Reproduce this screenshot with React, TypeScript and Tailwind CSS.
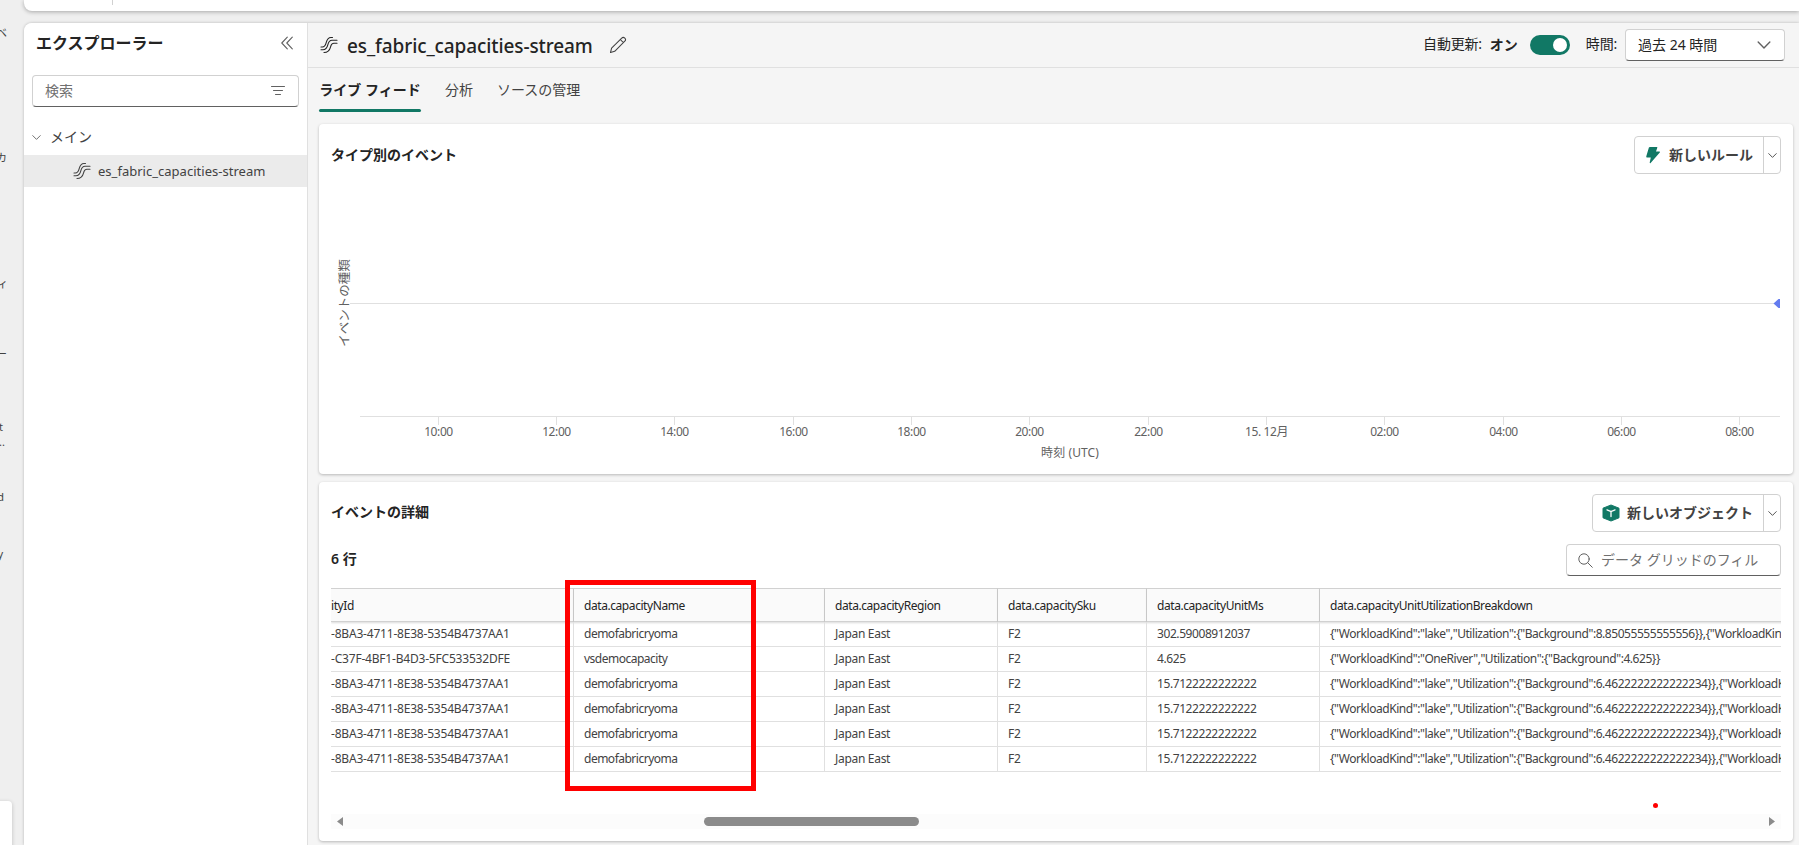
import React from "react";

const TICKS = [
  { label: "10:00", x: 438 },
  { label: "12:00", x: 556 },
  { label: "14:00", x: 674 },
  { label: "16:00", x: 793 },
  { label: "18:00", x: 911 },
  { label: "20:00", x: 1029 },
  { label: "22:00", x: 1148 },
  { label: "15. 12月", x: 1266 },
  { label: "02:00", x: 1384 },
  { label: "04:00", x: 1503 },
  { label: "06:00", x: 1621 },
  { label: "08:00", x: 1739 },
];

const AA1 = "-8BA3-4711-8E38-5354B4737AA1";
const LAKE = '{"WorkloadKind":"lake","Utilization":{"Background":6.4622222222222234}},{"WorkloadKind"';

const ROWS = [
  [AA1, "demofabricryoma", "Japan East", "F2", "302.59008912037", '{"WorkloadKind":"lake","Utilization":{"Background":8.85055555555556}},{"WorkloadKind"'],
  ["-C37F-4BF1-B4D3-5FC533532DFE", "vsdemocapacity", "Japan East", "F2", "4.625", '{"WorkloadKind":"OneRiver","Utilization":{"Background":4.625}}'],
  [AA1, "demofabricryoma", "Japan East", "F2", "15.7122222222222", LAKE],
  [AA1, "demofabricryoma", "Japan East", "F2", "15.7122222222222", LAKE],
  [AA1, "demofabricryoma", "Japan East", "F2", "15.7122222222222", LAKE],
  [AA1, "demofabricryoma", "Japan East", "F2", "15.7122222222222", LAKE],
];

const COLUMNS = [
  { name: "ityId", cell: "tracking-[-0.2px]" },
  { name: "data.capacityName", cell: "pl-[10px] tracking-[-0.5px]" },
  { name: "data.capacityRegion", cell: "pl-[10px] tracking-[-0.3px]" },
  { name: "data.capacitySku", cell: "pl-[10px] tracking-[-0.3px]" },
  { name: "data.capacityUnitMs", cell: "pl-[10px] tracking-[-0.42px]" },
  { name: "data.capacityUnitUtilizationBreakdown", cell: "pl-[10px] tracking-[-0.45px]" },
];

function StreamIcon() {
  return (
    <svg width="18" height="18" viewBox="0 0 18 18" fill="none" stroke="currentColor" strokeWidth="1.1" strokeLinecap="round">
      <path d="M1 11h1.300c2.400 0 3.200-1.500 3.900-4.300C7 3.300 8.300 1.500 11 1.500h1.500" />
      <path d="M1 13.700h1.800c3 0 4.200-1.500 5-4.900C8.700 5.400 9.700 4.300 12 4.300h5" />
      <path d="M4 16.500c3.700 0 5.500-1.500 6.500-5.400.7-2.800 1.500-3.800 3.500-3.800h3" />
    </svg>
  );
}

function Chevron({ size, className }: { size: number; className?: string }) {
  return (
    <svg className={className} width={size} height={size} viewBox="0 0 12 12" fill="none" stroke="currentColor" strokeWidth="1.2" strokeLinecap="round" strokeLinejoin="round">
      <path d="M1 3.500 6 8.500 11 3.500" />
    </svg>
  );
}

function SplitButton({ icon, label }: { icon: React.ReactNode; label: string }) {
  return (
    <div className="flex h-[38px] rounded-[4px] border border-[#d1d1d1] bg-white text-[#424242]">
      <div className="flex items-center gap-[7px] pl-[9px] pr-[10px]">
        {icon}
        <span className="pb-px text-[14px] leading-5 font-bold whitespace-nowrap">{label}</span>
      </div>
      <div className="flex w-[17px] items-center justify-center border-l border-[#d1d1d1]">
        <Chevron size={9} />
      </div>
    </div>
  );
}

function LeftRail() {
  return (
    <div className="relative h-full w-6 shrink-0 text-[11px] leading-4 text-[#424242]">
      <div className="absolute top-[25px] right-[17px]">ベ</div>
      <div className="absolute top-[150px] right-[17px]">カ</div>
      <div className="absolute top-[276px] right-[16px]">ィ</div>
      <div className="absolute top-[346px] right-[17px]">ー</div>
      <div className="absolute top-[419px] right-[21px]">t</div>
      <div className="absolute top-[434px] right-[19px]">...</div>
      <div className="absolute top-[489px] right-[20px]">d</div>
      <div className="absolute top-[546px] right-[21px]">y</div>
      <div className="absolute top-[801px] left-[-8px] h-[60px] w-[20px] rounded-[4px] bg-white shadow-[0_1px_4px_rgba(0,0,0,0.2)]" />
    </div>
  );
}

function Explorer() {
  return (
    <div className="flex w-[284px] shrink-0 flex-col border-r border-[#e0e0e0] bg-white">
      <div className="flex h-[40px] items-center justify-between pr-[14px] pl-3">
        <span className="text-[16px] leading-6 font-bold text-[#242424]">エクスプローラー</span>
        <svg width="12" height="14" viewBox="0 0 12 14" fill="none" stroke="#616161" strokeWidth="1.1" strokeLinecap="round" strokeLinejoin="round">
          <path d="M6.300 1.200.8 7l5.500 5.800M11.300 1.200 5.800 7l5.500 5.800" />
        </svg>
      </div>
      <div className="mx-2 mt-[12px] flex h-[32px] items-center justify-between rounded-[4px] border border-[#d1d1d1] border-b-[#616161] pr-[13px] pl-[12px] text-[14px] text-[#707070]">
        <span className="pb-[2px]">検索</span>
        <svg width="14" height="10" viewBox="0 0 14 10" fill="none" stroke="#616161" strokeWidth="1" strokeLinecap="round">
          <path d="M.5.5h13M2.500 4.500h9M4.500 8.500h5" />
        </svg>
      </div>
      <div className="mt-[12px] flex h-[36px] items-center gap-[9px] pl-2 text-[14px] text-[#424242]">
        <Chevron size={9} className="text-[#616161]" />
        <span className="pb-[2px]">メイン</span>
      </div>
      <div className="flex h-[32px] items-center gap-[7px] bg-[#ebebeb] pl-[49px] text-[#424242]">
        <StreamIcon />
        <span className="pt-[2px] text-[13px] tracking-[0.02px]">es_fabric_capacities-stream</span>
      </div>
    </div>
  );
}

function Header() {
  return (
    <div className="flex h-[45px] shrink-0 items-center border-b border-[#e0e0e0] pr-[14px] pl-[12px] text-[#242424]">
      <StreamIcon />
      <span className="ml-[9px] pt-[2px] text-[19px] leading-6 font-medium tracking-[-0.1px]">es_fabric_capacities-stream</span>
      <svg className="ml-[16px]" width="18" height="18" viewBox="0 0 18 18" fill="none" stroke="#424242" strokeWidth="1.050" strokeLinejoin="round">
        <path d="m1.500 16.500 1.100-4.300L12.700 2.100a2.100 2.100 0 0 1 3.100 3.100L5.700 15.300zM11.300 3.500l3.100 3.100" />
      </svg>
      <div className="ml-auto flex items-center text-[14px]">
        <span className="pb-[3px] tracking-[-0.2px]">自動更新:</span>
        <span className="ml-[8px] pb-[2px] font-bold">オン</span>
        <div className="ml-[12px] flex h-[20px] w-[40px] items-center justify-end rounded-full bg-[#117865] pr-[3px]">
          <div className="h-[14px] w-[14px] rounded-full bg-white" />
        </div>
        <span className="ml-[16px] pb-[3px] tracking-[-0.2px]">時間:</span>
        <div className="ml-[8px] flex h-[32px] w-[160px] items-center justify-between rounded-[4px] border border-[#d1d1d1] border-b-[#616161] bg-white pr-[13px] pl-[12px]">
          <span className="pb-[2px]">過去 24 時間</span>
          <Chevron size={14} className="text-[#616161]" />
        </div>
      </div>
    </div>
  );
}

function Tabs() {
  return (
    <div className="flex h-[56px] shrink-0 items-start pl-[11px] text-[14px] leading-5 text-[#424242]">
      <div className="flex h-[44px] w-[102px] flex-col items-center justify-between pt-[12px]">
        <span className="font-bold whitespace-nowrap text-[#242424]">ライブ フィード</span>
        <div className="h-[3px] w-full rounded-full bg-[#117865]" />
      </div>
      <span className="ml-[24px] pt-[12px]">分析</span>
      <span className="ml-[24px] pt-[12px]">ソースの管理</span>
    </div>
  );
}

function EventsChart() {
  return (
    <div className="mr-[6px] ml-[11px] h-[350px] shrink-0 rounded-[4px] bg-white shadow-[0_1px_3px_rgba(0,0,0,0.25)]">
      <div className="flex items-start justify-between pt-[12px] pr-[12px] pl-[12px]">
        <span className="pt-[9px] text-[14px] leading-5 font-bold text-[#242424]">タイプ別のイベント</span>
        <SplitButton
          label="新しいルール"
          icon={
            <svg width="18" height="18" viewBox="0 0 18 18" fill="#117865">
              <path d="M5.800 1h7a.5.5 0 0 1 .5.700L12 5.500h3.300c.6 0 .9.700.5 1.100L6.600 17.100c-.4.400-1 .1-.9-.5L6.800 11.500H3.200a.9.900 0 0 1-.9-1.200L4.900 1.600z" />
            </svg>
          }
        />
      </div>
      <svg width="1474" height="300" viewBox="319 174 1474 300" className="block text-[12px]" fill="#616161">
        <path d="M350 303.500H1774M360 416.500h1420" stroke="#e0e0e0" fill="none" />
        {TICKS.map((t) => (
          <g key={t.label}>
            <path d={`M${t.x + 0.5} 417v8`} stroke="#e0e0e0" />
            <text x={t.x + 0.5} y="436" textAnchor="middle" className="tracking-[-0.4px]">{t.label}</text>
          </g>
        ))}
        <text x="1070" y="456.500" textAnchor="middle" className="tracking-[0.1px]">時刻 (UTC)</text>
        <text transform="translate(349 303) rotate(-90)" textAnchor="middle" className="text-[12.500px]">イベントの種類</text>
        <path d="M1773.500 303.500l5-4.500h1.500v9h-1.500z" fill="#637cef" />
      </svg>
    </div>
  );
}

function DataGrid() {
  return (
    <div className="mt-[12px] mr-[12px] ml-[12px] overflow-hidden text-[12px] text-[#424242]">
      <div className="grid w-[1600px] grid-cols-[243px_251px_173px_149px_173px_1fr]">
        {COLUMNS.map((col, i) => (
          <div
            key={col.name}
            className={
              "flex h-[34px] items-center border-t border-r border-b border-[#d1d1d1] bg-[#fafafa] pt-px tracking-[-0.43px] text-[#242424] shadow-[0_1px_2px_rgba(0,0,0,0.15)] " +
              (i === 0 ? "" : "pl-[10px]")
            }
          >
            {col.name}
          </div>
        ))}
        {ROWS.map((row, r) =>
          row.map((cell, i) => (
            <div
              key={r + "-" + i}
              className={"flex h-[25px] items-center border-r border-b border-[#e0e0e0] whitespace-nowrap " + COLUMNS[i].cell}
            >
              {cell}
            </div>
          ))
        )}
      </div>
    </div>
  );
}

function EventDetails() {
  return (
    <div className="relative mt-2 mr-[6px] ml-[11px] h-[359px] shrink-0 rounded-[4px] bg-white shadow-[0_1px_3px_rgba(0,0,0,0.25)]">
      <div className="flex items-start justify-between pt-[12px] pr-[12px] pl-[12px]">
        <span className="pt-[8px] text-[14px] leading-5 font-bold text-[#242424]">イベントの詳細</span>
        <SplitButton
          label="新しいオブジェクト"
          icon={
            <svg width="18" height="18" viewBox="0 0 18 18">
              <path d="M9 1 17 4.200v9.600L9 17l-8-3.200V4.200z" fill="#117865" stroke="#117865" strokeLinejoin="round" />
              <path d="M5 5.800 9 7.500l4-1.700M9 7.500v5" stroke="#fff" strokeWidth="1.300" fill="none" strokeLinecap="round" />
            </svg>
          }
        />
      </div>
      <div className="mt-[12px] flex items-center justify-between pr-[12px] pl-[12px]">
        <span className="pb-[3px] text-[14px] font-semibold text-[#242424]">6 行</span>
        <div className="flex h-[32px] w-[215px] items-center gap-[8px] rounded-[4px] border border-[#d1d1d1] border-b-[#616161] pl-[11px] text-[14px] text-[#707070]">
          <svg width="15" height="15" viewBox="0 0 15 15" fill="none" stroke="#616161" strokeLinecap="round">
            <circle cx="6" cy="6" r="5.200" />
            <path d="m9.800 9.800 4.500 4.500" />
          </svg>
          <span className="pb-[2px] whitespace-nowrap">データ グリッドのフィル</span>
        </div>
      </div>
      <DataGrid />
      <div className="mx-[12px] mt-[42px] flex h-[15px] items-center bg-[#fcfcfc] px-[6px] text-[#8b8b8b]">
        <svg width="6" height="9" viewBox="0 0 6 9" fill="currentColor">
          <path d="M6 0v9L0 4.500z" />
        </svg>
        <div className="mr-[850px] ml-auto h-[9px] w-[215px] rounded-full bg-[#8b8b8b]" />
        <svg width="6" height="9" viewBox="0 0 6 9" fill="currentColor">
          <path d="M0 0v9l6-4.500z" />
        </svg>
      </div>
      {/* annotations */}
      <div className="absolute top-[98px] left-[246px] h-[211px] w-[191px] border-[5px] border-[#ff0000]" />
      <div className="absolute top-[321px] left-[1334px] h-[5px] w-[5px] rounded-full bg-[#ff0000]" />
    </div>
  );
}

export default function App() {
  return (
    <div className="flex h-[845px] w-[1799px] overflow-hidden bg-[#efefef] font-['Noto_Sans','Noto_Sans_CJK_JP',sans-serif]">
      <LeftRail />
      <div className="flex h-full flex-1 flex-col">
        <div className="h-[11px] shrink-0 rounded-bl-[8px] bg-white pl-[88px] shadow-[0_1px_4px_rgba(0,0,0,0.3)]">
          <div className="h-[5px] w-px bg-[#d1d1d1]" />
        </div>
        <div className="mt-[12px] flex flex-1 overflow-hidden rounded-tl-[8px] bg-[#f5f5f5] shadow-[0_0_3px_rgba(0,0,0,0.25)]">
          <Explorer />
          <div className="flex w-[1491px] flex-col">
            <Header />
            <Tabs />
            <EventsChart />
            <EventDetails />
          </div>
        </div>
      </div>
    </div>
  );
}
